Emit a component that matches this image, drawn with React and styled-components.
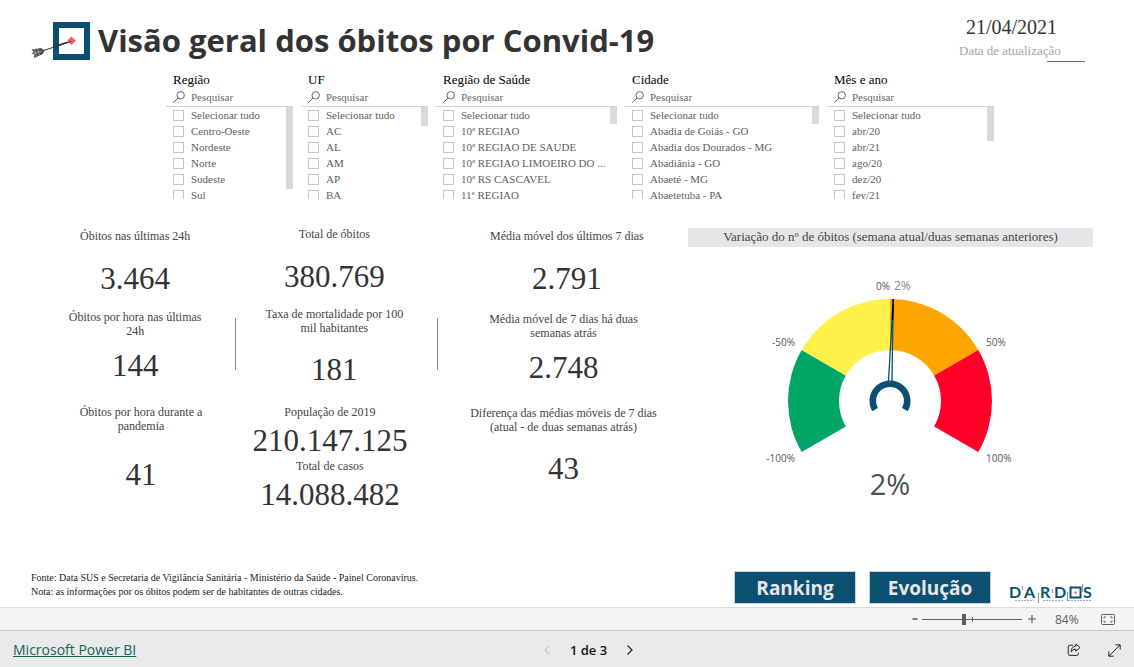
import React, { useState } from "react";
import styled, { createGlobalStyle } from "styled-components";

const SERIF = `"Liberation Serif", "Times New Roman", serif`;
const SANS = `"Open Sans", "Noto Sans", sans-serif`;
const BRAND = "#0b4f71";

const GlobalStyle = createGlobalStyle`
  *, *::before, *::after { box-sizing: border-box; }
  body { margin: 0; background: #fff; }
  button, input { font: inherit; color: inherit; }
`;

const Page = styled.div`
  min-height: 100vh;
  display: flex;
  flex-direction: column;
  font-family: ${SERIF};
  color: #333;
`;

const Report = styled.main`
  flex: 1;
  display: flex;
  flex-direction: column;
  background: #fff;
`;

const Header = styled.header`
  height: 72px;
  display: flex;
  align-items: flex-start;
  padding: 14px 49px 0 30px;
`;

const LogoMark = styled.svg`
  width: 62px;
  height: 42px;
  margin-top: 6px;
  flex: none;
`;

const Title = styled.h1`
  margin: 0 auto 0 6px;
  font-family: ${SANS};
  font-size: 31px;
  line-height: 52px;
  font-weight: 700;
  white-space: nowrap;
  color: #333;
`;

const Updated = styled.div`
  display: flex;
  flex-direction: column;
  width: 126px;
`;

const UpdatedDate = styled.time`
  padding-left: 7px;
  font-size: 20px;
  line-height: 26px;
`;

const UpdatedLabel = styled.span`
  font-size: 13px;
  line-height: 21px;
  color: #a6a6a6;
`;

const UpdatedRule = styled.span`
  align-self: flex-end;
  width: 38px;
  border-top: 1px solid #666;
`;

const Slicers = styled.section`
  display: grid;
  grid-template-columns: 127fr 127fr 181fr 194fr 167fr;
  gap: 8px;
  padding: 0 140px 0 166px;
`;

const SlicerBox = styled.div`
  min-width: 0;
`;

const SlicerTitle = styled.h2`
  margin: 0;
  padding-left: 7px;
  font-size: 13px;
  line-height: 16px;
  font-weight: 400;
  color: #000;
`;

const Search = styled.label`
  display: flex;
  align-items: center;
  gap: 6px;
  height: 19px;
  padding-left: 7px;
  border-bottom: 1px solid #d2d2d2;
  svg { width: 12px; height: 12px; flex: none; }
`;

const SearchInput = styled.input`
  flex: 1;
  min-width: 0;
  padding: 0;
  border: 0;
  outline: none;
  background: none;
  font-size: 11px;
  line-height: 16px;
  &::placeholder { color: #666; opacity: 1; }
`;

const ListWrap = styled.div`
  display: flex;
  height: 92px;
  overflow: hidden;
`;

const List = styled.ul`
  flex: 1;
  min-width: 0;
  margin: 0;
  padding: 0 0 0 7px;
  list-style: none;
`;

const Option = styled.label`
  display: flex;
  align-items: center;
  gap: 7px;
  height: 16px;
  font-size: 11px;
  white-space: nowrap;
  color: #605e5c;
`;

const Tick = styled.input`
  appearance: none;
  flex: none;
  width: 11px;
  height: 11px;
  margin: 0;
  border: 1px solid #c8c6c4;
  &:checked { background: #605e5c; }
`;

const ScrollThumb = styled.div`
  flex: none;
  width: 7px;
  height: ${p => p.$size}px;
  background: #d9d9d9;
`;

const Body = styled.section`
  display: grid;
  grid-template-columns: 166fr 2px 178fr 2px 227fr 405fr;
  column-gap: 11px;
  padding: 27px 41px 0 58px;
`;

const Column = styled.div`
  display: flex;
  flex-direction: column;
  align-items: ${p => (p.$end ? "flex-end" : "flex-start")};
  min-width: 0;
`;

const CardBox = styled.div`
  width: ${p => p.$width};
  padding-top: ${p => p.$top}px;
  display: flex;
  flex-direction: column;
  gap: ${p => p.$gap}px;
  text-align: center;
`;

const CardLabel = styled.div`
  font-size: 12px;
  line-height: 14px;
  white-space: pre-line;
  color: #444;
`;

const CardValue = styled.div`
  font-size: 31px;
  line-height: 32px;
  color: #333;
`;

const Divider = styled.div`
  height: 52px;
  margin-top: 92px;
  border-left: 1px solid #888;
`;

const GaugePanel = styled.div`
  padding-top: 2px;
`;

const GaugeTitle = styled.h2`
  margin: 0;
  padding-bottom: 2px;
  background: #e6e6e6;
  font-size: 13px;
  line-height: 17px;
  font-weight: 400;
  text-align: center;
  color: #444;
`;

const GaugeChart = styled.svg`
  display: block;
  width: 100%;
  font-family: ${SANS};
`;

const Bottom = styled.footer`
  margin-top: auto;
  display: flex;
  align-items: flex-end;
  padding: 0 39px 3px 31px;
`;

const Notes = styled.p`
  margin: 0 auto 5px 0;
  font-size: 10px;
  line-height: 14px;
  color: #222;
`;

const NavButton = styled.button`
  width: 122px;
  height: 33px;
  margin-right: 13px;
  padding: 0;
  border: 1px solid #c5d5dd;
  background: ${BRAND};
  color: #e6e6e6;
  font-family: ${SANS};
  font-size: 19px;
  line-height: 28px;
  font-weight: 700;
  cursor: pointer;
`;

const Wordmark = styled.svg`
  width: 88px;
  height: 24px;
  margin-left: 3px;
  font-family: Lato, ${SANS};
`;

const ZoomBar = styled.div`
  height: 23px;
  display: flex;
  align-items: center;
  justify-content: flex-end;
  padding-right: 18px;
  border-top: 1px solid #dcdcdc;
  background: #f4f4f4;
  font-family: ${SANS};
  font-size: 12px;
  color: #605e5c;
`;

const IconButton = styled.button`
  display: grid;
  place-items: center;
  flex: none;
  width: ${p => p.$size || 16}px;
  height: 20px;
  padding: 0;
  border: 0;
  background: none;
  cursor: pointer;
`;

const ZoomRange = styled.input`
  appearance: none;
  width: 100px;
  height: 11px;
  margin: 0 2px 0 1px;
  background:
    linear-gradient(#605e5c, #605e5c) 50px 50% / 1px 5px no-repeat,
    linear-gradient(#605e5c, #605e5c) 0 50% / 100% 1px no-repeat;
  &::-webkit-slider-thumb {
    appearance: none;
    width: 4px;
    height: 11px;
    background: #605e5c;
  }
`;

const ZoomValue = styled.span`
  width: 24px;
  margin: 0 21px 0 15px;
`;

const EmbedBar = styled.div`
  height: 37px;
  display: grid;
  grid-template-columns: 1fr auto 1fr;
  align-items: center;
  padding: 2px 12px 0 13px;
  border-top: 1px solid #c8c8c8;
  background: #eaeaea;
  font-family: ${SANS};
`;

const BrandLink = styled.a`
  justify-self: start;
  font-size: 14px;
  line-height: 20px;
  color: #11645a;
`;

const Pager = styled.div`
  display: flex;
  align-items: center;
  gap: 15px;
  padding-left: 42px;
  font-size: 13px;
  font-weight: 600;
  color: #111;
`;

const Actions = styled.div`
  justify-self: end;
  display: flex;
  gap: 24px;
  color: #222;
`;

const slicers = [
  {
    title: "Região",
    thumb: 82,
    options: ["Selecionar tudo", "Centro-Oeste", "Nordeste", "Norte", "Sudeste", "Sul"],
  },
  {
    title: "UF",
    thumb: 19,
    options: ["Selecionar tudo", "AC", "AL", "AM", "AP", "BA"],
  },
  {
    title: "Região de Saúde",
    thumb: 17,
    options: [
      "Selecionar tudo",
      "10ª REGIAO",
      "10ª REGIAO DE SAUDE",
      "10ª REGIAO LIMOEIRO DO ...",
      "10ª RS CASCAVEL",
      "11ª REGIAO",
    ],
  },
  {
    title: "Cidade",
    thumb: 17,
    options: [
      "Selecionar tudo",
      "Abadia de Goiás - GO",
      "Abadia dos Dourados - MG",
      "Abadiânia - GO",
      "Abaeté - MG",
      "Abaetetuba - PA",
    ],
  },
  {
    title: "Mês e ano",
    thumb: 34,
    options: ["Selecionar tudo", "abr/20", "abr/21", "ago/20", "dez/20", "fev/21"],
  },
];

const dailyCards = [
  { label: "Óbitos nas últimas 24h", value: "3.464", width: "93%", top: 3, gap: 20 },
  { label: "Óbitos por hora nas últimas\n24h", value: "144", width: "93%", top: 15, gap: 12 },
  { label: "Óbitos por hora durante a\npandemia", value: "41", width: "100%", top: 23, gap: 26 },
];

const totalCards = [
  { label: "Total de óbitos", value: "380.769", width: "97%", top: 1, gap: 20 },
  { label: "Taxa de mortalidade por 100\nmil habitantes", value: "181", width: "97%", top: 14, gap: 19 },
  { label: "População de 2019", value: "210.147.125", width: "92%", top: 19, gap: 6 },
  { label: "Total de casos", value: "14.088.482", width: "92%", top: 2, gap: 6 },
];

const averageCards = [
  { label: "Média móvel dos últimos 7 dias", value: "2.791", width: "97%", top: 3, gap: 20 },
  { label: "Média móvel de 7 dias há duas\nsemanas atrás", value: "2.748", width: "100%", top: 17, gap: 12 },
  { label: "Diferença das médias móveis de 7 dias\n(atual - de duas semanas atrás)", value: "43", width: "100%", top: 22, gap: 19 },
];

const CX = 202;
const CY = 154;

// angle is measured clockwise from 12 o'clock
const polar = (r, deg) => {
  const a = (deg * Math.PI) / 180;
  return `${(CX + r * Math.sin(a)).toFixed(2)} ${(CY - r * Math.cos(a)).toFixed(2)}`;
};

const ring = (outer, inner, from, to) => {
  const large = to - from > 180 ? 1 : 0;
  return `M${polar(outer, from)} A${outer} ${outer} 0 ${large} 1 ${polar(outer, to)}
    L${polar(inner, to)} A${inner} ${inner} 0 ${large} 0 ${polar(inner, from)} Z`;
};

function Slicer({ title, options, thumb }) {
  const [query, setQuery] = useState("");
  const visible = options.filter(o => o.toLowerCase().includes(query.toLowerCase()));

  return (
    <SlicerBox>
      <SlicerTitle>{title}</SlicerTitle>
      <Search>
        <svg viewBox="0 0 12 12" fill="none" stroke="#666">
          <circle cx="7.7" cy="4.3" r="3.7" />
          <path d="M5 7 L0.3 11.7" />
        </svg>
        <SearchInput
          aria-label={`Pesquisar ${title}`}
          placeholder="Pesquisar"
          value={query}
          onChange={e => setQuery(e.target.value)}
        />
      </Search>
      <ListWrap>
        <List>
          {visible.map(o => (
            <li key={o}>
              <Option>
                <Tick type="checkbox" />
                {o}
              </Option>
            </li>
          ))}
        </List>
        <ScrollThumb $size={thumb} />
      </ListWrap>
    </SlicerBox>
  );
}

function Cards({ items, end }) {
  return (
    <Column $end={end}>
      {items.map(c => (
        <CardBox key={c.label} $width={c.width} $top={c.top} $gap={c.gap}>
          <CardLabel>{c.label}</CardLabel>
          <CardValue>{c.value}</CardValue>
        </CardBox>
      ))}
    </Column>
  );
}

function Gauge() {
  return (
    <GaugeChart viewBox="0 0 405 262" role="img" aria-label="Variação de 2%">
      <path d={ring(102, 51, -120, -60)} fill="#00a665" />
      <path d={ring(102, 51, -60, 0)} fill="#fff04a" />
      <path d={ring(102, 51, 0, 60)} fill="#ffa500" />
      <path d={ring(102, 51, 60, 120)} fill="#ff0029" />
      <path
        d={`M${CX - 1.5} ${CY - 20} L${polar(101, 1.8)} L${CX + 2} ${CY - 20}`}
        fill="none"
        stroke={BRAND}
        strokeWidth="1.3"
      />
      <path d={`M${polar(81, 1.8)} L${polar(102, 1.8)}`} stroke="#000" strokeWidth="1.6" />
      <path d={ring(20.5, 14, -120, 120)} fill={BRAND} />
      <g fontSize="10" fill="#555">
        <text x="107" y="99" textAnchor="end">-50%</text>
        <text x="107" y="215" textAnchor="end">-100%</text>
        <text x="202" y="43" textAnchor="end">0%</text>
        <text x="298" y="99">50%</text>
        <text x="298" y="215">100%</text>
      </g>
      <text x="206" y="43" fontSize="12" fill="#888">2%</text>
      <text x={CX} y="248" fontSize="29" textAnchor="middle" fill="#505050">2%</text>
    </GaugeChart>
  );
}

export default function App() {
  const [zoom, setZoom] = useState(42);

  return (
    <Page>
      <GlobalStyle />
      <Report>
        <Header>
          <LogoMark viewBox="0 0 62 42" fill="none">
            <rect x="26" y="5" width="31" height="32" fill="#fff" stroke={BRAND} strokeWidth="6" />
            <path d="M41.5 16.5 L45.8 20.8 L41.5 25 L37.2 20.8 Z" fill="#f7595f" />
            <path d="M9 32 L41 21.5" stroke="#444" strokeWidth="1.2" />
            <path d="M23 26.5 L37 21.6 L38 22.8 L24 27.8 Z" fill="#333" />
            <path
              d="M1.5 29.5 L11 28 L14.5 30.6 L12.5 34.2 L4 38 L4.5 34.5 L1.5 33.5 L4 32 Z"
              fill="#4a4a4a"
            />
            <path d="M4.5 29 L6.5 36 M7.5 28.6 L9.5 35.5 M3 33.8 L12 31" stroke="#ccc" strokeWidth="0.6" />
          </LogoMark>
          <Title>Visão geral dos óbitos por Convid-19</Title>
          <Updated>
            <UpdatedDate dateTime="2021-04-21">21/04/2021</UpdatedDate>
            <UpdatedLabel>Data de atualização</UpdatedLabel>
            <UpdatedRule />
          </Updated>
        </Header>

        <Slicers>
          {slicers.map(s => (
            <Slicer key={s.title} {...s} />
          ))}
        </Slicers>

        <Body>
          <Cards items={dailyCards} />
          <Divider />
          <Cards items={totalCards} />
          <Divider />
          <Cards items={averageCards} end />
          <GaugePanel>
            <GaugeTitle>Variação do nº de óbitos (semana atual/duas semanas anteriores)</GaugeTitle>
            <Gauge />
          </GaugePanel>
        </Body>

        <Bottom>
          <Notes>
            Fonte: Data SUS e Secretaria de Vigilância Sanitária - Ministério da Saúde - Painel Coronavírus.
            <br />
            Nota: as informações por os óbitos podem ser de habitantes de outras cidades.
          </Notes>
          <NavButton type="button">Ranking</NavButton>
          <NavButton type="button">Evolução</NavButton>
          <Wordmark viewBox="0 0 88 24" role="img" aria-label="Dardos">
            <g fontSize="16" fontWeight="700" fill={BRAND}>
              <text x="2" y="18">D</text>
              <text x="17" y="18">A</text>
              <text x="33" y="18">R</text>
              <text x="47" y="18">D</text>
              <text x="76" y="18">S</text>
            </g>
            <rect x="63.5" y="7.5" width="10" height="10" fill="#fff" stroke={BRAND} strokeWidth="2" />
            <path d="M68.5 10.9 L70.1 12.5 L68.5 14.1 L66.9 12.5 Z" fill="#f7595f" />
            <path
              d="M15.5 6 V10 M31.5 13 V23 M45.5 9 V13 M60.5 12 V21 M75.5 4 V12"
              stroke="#999"
              strokeWidth="1.2"
            />
            <path d="M8 20.5 H27 M36 20.5 H57 M61 20.5 H84" stroke="#aaa" strokeDasharray="2 1" />
          </Wordmark>
        </Bottom>
      </Report>

      <ZoomBar>
        <IconButton type="button" aria-label="Reduzir" $size={12}>
          <svg width="6" height="2"><path d="M0.5 1 H5.5" stroke="currentColor" strokeWidth="1.6" /></svg>
        </IconButton>
        <ZoomRange
          type="range"
          aria-label="Zoom"
          value={zoom}
          onChange={e => setZoom(Number(e.target.value))}
        />
        <IconButton type="button" aria-label="Ampliar">
          <svg width="8" height="8"><path d="M0 4 H8 M4 0 V8" stroke="currentColor" strokeWidth="1.2" /></svg>
        </IconButton>
        <ZoomValue>84%</ZoomValue>
        <IconButton type="button" aria-label="Ajustar à página">
          <svg width="14" height="11" viewBox="0 0 14 11" fill="none" stroke="currentColor">
            <rect x="0.5" y="0.5" width="13" height="10" rx="1" />
            <path d="M3 4.5 V3 H4.8 M9.2 3 H11 V4.5 M3 6.5 V8 H4.8 M9.2 8 H11 V6.5" />
          </svg>
        </IconButton>
      </ZoomBar>

      <EmbedBar>
        <BrandLink href="https://powerbi.microsoft.com">Microsoft Power BI</BrandLink>
        <Pager>
          <IconButton type="button" aria-label="Página anterior" disabled>
            <svg width="6" height="10" fill="none" stroke="#b5b5b5"><path d="M5.5 0.5 L1 5 L5.5 9.5" /></svg>
          </IconButton>
          <span>1 de 3</span>
          <IconButton type="button" aria-label="Próxima página">
            <svg width="6" height="10" fill="none" stroke="#222" strokeWidth="1.2"><path d="M0.5 0.5 L5 5 L0.5 9.5" /></svg>
          </IconButton>
        </Pager>
        <Actions>
          <IconButton type="button" aria-label="Compartilhar">
            <svg width="14" height="14" viewBox="0 0 14 14" fill="none" stroke="currentColor" strokeLinejoin="round">
              <path d="M6 2.2 H3 Q1.2 2.2 1.2 4 V10.6 Q1.2 12.4 3 12.4 H9.6 Q11.4 12.4 11.4 10.6 V9.6" />
              <path d="M8.8 1 L13 4.6 L8.8 8.2 V6.2 Q5.8 6 4 8.8 Q4.2 3.6 8.8 3.2 Z" />
            </svg>
          </IconButton>
          <IconButton type="button" aria-label="Tela inteira">
            <svg width="13" height="13" viewBox="0 0 13 13" fill="none" stroke="currentColor">
              <path d="M1 12 L12 1 M7.5 0.8 H12.2 V5.5 M0.8 7.5 V12.2 H5.5" />
            </svg>
          </IconButton>
        </Actions>
      </EmbedBar>
    </Page>
  );
}
